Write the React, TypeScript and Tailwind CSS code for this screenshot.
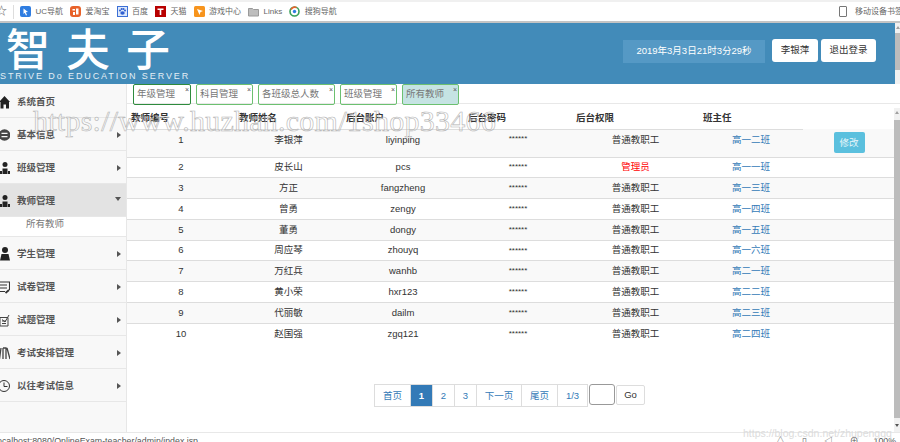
import React from "react";

const font = "font-['Liberation_Sans','Noto_Sans_CJK_SC',sans-serif]";

const B = ({ children }: { children: React.ReactNode }) => (
  <svg width="11" height="11" viewBox="0 0 11 11" className="shrink-0">
    {children}
  </svg>
);

const bookmarks: [string, React.ReactNode][] = [
  ["UC导航", <B><rect width="11" height="11" rx="2" fill="#2f7de1" /><path d="M3.500 2.500 8 6 5.800 6.300 7 9 6 9.400 4.800 6.800 3.500 8z" fill="#fff" /></B>],
  ["爱淘宝", <B><rect width="11" height="11" rx="3" fill="#e8622a" /><path d="M2.500 3h2.500v1.500H2.500zM6 2.500h2.500v6H6zM3 6h2v3H3z" fill="#fff" /></B>],
  ["百度", <B><rect x=".5" y=".5" width="10" height="10" fill="#dce8fb" stroke="#3b6fd6" /><ellipse cx="5.500" cy="7" rx="2.200" ry="1.800" fill="#2f5fd0" /><circle cx="3" cy="4.500" r="1" fill="#2f5fd0" /><circle cx="4.700" cy="3" r="1" fill="#2f5fd0" /><circle cx="6.500" cy="3" r="1" fill="#2f5fd0" /><circle cx="8" cy="4.500" r="1" fill="#2f5fd0" /></B>],
  ["天猫", <B><rect width="11" height="11" fill="#b80000" /><path d="M2.500 2.500h6v1.600H6.300V9H4.700V4.100H2.500z" fill="#fff" /></B>],
  ["游戏中心", <B><rect width="11" height="11" rx="1.500" fill="#f7941d" /><path d="m3 3 6 2-2.500 1L5.500 9z" fill="#fff" /></B>],
  ["Links", <B><path d="M.5 2.500h4l1 1h5v6.500H.5z" fill="#bdbdbd" stroke="#9a9a9a" /></B>],
  ["搜狗导航", <B><circle cx="5.500" cy="5.500" r="4.500" fill="#fff" stroke="#3aa05a" strokeWidth="1.600" /><path d="M2 3.500A4.500 4.500 0 0 1 7.500 1.500" fill="none" stroke="#e8622a" strokeWidth="1.600" /><circle cx="5.500" cy="5.500" r="1.700" fill="#2f7de1" /></B>],
];

const rows = [
  ["1", "李银萍", "liyinping", "普通教职工", "高一二班"],
  ["2", "皮长山", "pcs", "管理员", "高一一班"],
  ["3", "方正", "fangzheng", "普通教职工", "高一三班"],
  ["4", "曾勇", "zengy", "普通教职工", "高一四班"],
  ["5", "董勇", "dongy", "普通教职工", "高一五班"],
  ["6", "周应琴", "zhouyq", "普通教职工", "高一六班"],
  ["7", "万红兵", "wanhb", "普通教职工", "高二一班"],
  ["8", "黄小荣", "hxr123", "普通教职工", "高二二班"],
  ["9", "代丽敏", "dailm", "普通教职工", "高二三班"],
  ["10", "赵国强", "zgq121", "普通教职工", "高二四班"],
];

const Ic = ({ children }: { children: React.ReactNode }) => (
  <svg width="16" height="16" viewBox="0 0 16 16" className="shrink-0 ml-[-6px] text-[#222]" fill="currentColor">
    {children}
  </svg>
);
const People = (
  <>
    <circle cx="11" cy="4.500" r="2.500" />
    <path d="M8.500 8.500h5V14h-5z" />
    <path d="M6 11h2v3H6zM14 11h2v3h-2z" />
  </>
);
const Student = (
  <>
    <circle cx="11" cy="4" r="3" />
    <path d="M7.500 8h7l1.500 6.500H6z" />
  </>
);
const icons: React.ReactNode[] = [
  <path d="M10.500 2 5 8h1.500v6.500h3v-4h2.500v4h3V8H16z" />,
  <>
    <circle cx="10.500" cy="8" r="5.800" fill="#444" />
    <path d="M7.500 5.800h6v1.200h-6zM7.500 9h6v1.200h-6z" fill="#f5f5f5" />
  </>,
  People,
  People,
  Student,
  <g fill="none" stroke="#333" strokeWidth="1.100">
    <path d="M5 3h10.500v8M5 6h8M5 9h8M5 12.500h6" />
    <path d="m11.500 14 3.500-3" strokeWidth="1.800" />
  </g>,
  <g fill="none" stroke="#444" strokeWidth="1">
    <path d="M6 5.500h8V14H6zM8 9h4M8 11.500h4" />
    <path d="m8 7.500 3 2.500 4-7" />
  </g>,
  <g fill="none" stroke="#444" strokeWidth="1.300">
    <path d="M7 3 5.500 14M9 3v11M9 3h3v11M13 3l3 11" />
  </g>,
  <g fill="none" stroke="#333" strokeWidth="1">
    <circle cx="10" cy="8" r="5.500" />
    <path d="M10 4.500V8.500h3.500" />
  </g>,
];

const menu = ["系统首页", "基本信息", "班级管理", "教师管理", "学生管理", "试卷管理", "试题管理", "考试安排管理", "以往考试信息"];

const tabs: [string, string, string][] = [
  ["年级管理", "w-[58px]", "border-[#2e8b3d]"],
  ["科目管理", "w-[57px]", "border-[#6cc070]"],
  ["各班级总人数", "w-[77px]", "border-[#6cc070]"],
  ["班级管理", "w-[57px]", "border-[#6cc070]"],
  ["所有教师", "w-[57px]", "border-[#6cc070] bg-[#c5e3e3]"],
];

const Scroll = ({ thumb, gap }: { thumb: string; gap: string }) => (
  <>
    <div className={`${gap} flex justify-center pt-[3px]`}>
      <span className="w-0 h-0 border-x-[2.500px] border-x-transparent border-b-[3px] border-b-[#a0a0a0]" />
    </div>
    <div className={`${thumb} bg-[#bcbcbc]`} />
  </>
);

export default function App() {
  return (
    <div className={`${font} w-[900px] h-[442px] overflow-hidden relative bg-white flex flex-col`}>
      {/* browser bookmark bar */}
      <div className="h-[23px] shrink-0 border-t-2 border-t-[#f0f0f0] border-b-2 border-b-[#c4c4c4] flex items-center text-[8px] text-[#666]">
        <span className="text-[#666] text-[11px] ml-[-4px] w-[17px]">☆</span>
        <span className="w-px h-[14px] bg-[#ddd] mr-[6px]" />
        {bookmarks.map(([t, i]) => (
          <span key={t} className="flex items-center gap-[4.500px] mr-[7px]">
            {i}
            {t}
          </span>
        ))}
        <span className="ml-auto flex items-center gap-[8px] mr-[-3px] whitespace-nowrap">
          <span className="w-[8px] h-[11px] border border-[#777] rounded-[1px]" />
          移动设备书签
        </span>
      </div>

      {/* header */}
      <div className="h-[61px] shrink-0 bg-[#428bb9] relative flex items-center justify-end pr-[24px]">
        <div className="absolute left-[6px] top-[2px] text-white text-[44px] leading-[44px] tracking-[16px] font-['Noto_Sans_CJK_SC',sans-serif] font-medium">智夫子</div>
        <div className="absolute left-0 top-[47px] text-[#e3eef5] text-[9px] leading-[12px] tracking-[1.900px] whitespace-nowrap">STRIVE Do EDUCATION SERVER</div>
        <div className="w-[142px] h-[23px] bg-[#5599c5] text-white text-[9.500px] flex items-center justify-center mr-[7px] mt-[-4px]">2019年3月3日21时3分29秒</div>
        <div className="w-[46px] h-[23px] bg-white rounded-[3px] text-[#333] text-[9.500px] flex items-center justify-center mr-[3px] mt-[-6px]">李银萍</div>
        <div className="w-[55px] h-[23px] bg-white rounded-[3px] text-[#333] text-[9.500px] flex items-center justify-center mt-[-6px]">退出登录</div>
        <div className="absolute right-0 top-0 bottom-0 w-[5px] bg-[#f1f1f1] flex flex-col">
          <Scroll gap="h-[10px]" thumb="h-[37px]" />
        </div>
      </div>

      {/* body */}
      <div className="flex-1 flex min-h-0">
        <div className="w-[127px] shrink-0 bg-[#f8f8f8] border-r border-[#e7e7e7] flex flex-col text-[9.500px] font-bold text-[#555] pt-px">
          {menu.map((m, i) => (
            <React.Fragment key={m}>
              <div className={`h-[33px] shrink-0 flex items-center gap-[7px] pr-[5px] pt-[2px] border-b border-[#e7e7e7] ${i === 3 ? "bg-[#e3e3e3]" : ""}`}>
                <Ic>{icons[i]}</Ic>
                <span className="flex-1 whitespace-nowrap">{m}</span>
                {i > 0 && (i === 3 ? (
                  <span className="w-0 h-0 border-x-[3.500px] border-x-transparent border-t-[4px] border-t-[#555] mb-[4px]" />
                ) : (
                  <span className="w-0 h-0 border-y-[3.500px] border-y-transparent border-l-[4px] border-l-[#555]" />
                ))}
              </div>
              {i === 3 && (
                <div className="h-[20px] shrink-0 bg-white border-b border-[#e7e7e7] pl-[26px] flex items-center font-normal text-[9.500px] text-[#777] pb-[4px]">所有教师</div>
              )}
            </React.Fragment>
          ))}
        </div>

        <div className="flex-1 min-w-0 flex flex-col">
          <div className="h-[19px] shrink-0 flex gap-[5px] pl-[6px] text-[9.500px] text-[#777] border-b border-[#e8e8e8] box-content">
            {tabs.map(([t, w, c]) => (
              <div key={t} className={`${w} h-[21px] rounded-[2px] border ${c} relative flex items-center pl-[3px] whitespace-nowrap`}>
                {t}
                <span className="absolute right-[1px] top-[0px] text-[7px] leading-[10px] text-[#555]">×</span>
              </div>
            ))}
          </div>

          <div className="flex-1 min-h-0 pt-[3px] pr-[5px] flex flex-col">
            <table className="table-fixed w-[768px] border-collapse text-[9.500px] text-[#333]">
              <colgroup>
                <col className="w-[108px]" />
                <col className="w-[107px]" />
                <col className="w-[122px]" />
                <col className="w-[108px]" />
                <col className="w-[127px]" />
                <col className="w-[104px]" />
                <col className="w-[92px]" />
              </colgroup>
              <thead>
                <tr className="h-[22px]">
                  {["教师编号", "教师姓名", "后台账户", "后台密码", "后台权限", "班主任", ""].map((h, i) => (
                    <th key={i} className={`text-left font-bold align-middle pl-[4px] ${i < 6 ? "border-b border-[#ddd]" : ""}`}>{h}</th>
                  ))}
                </tr>
              </thead>
              <tbody>
                {rows.map((r, i) => {
                  const v = i === 0 ? "align-top pt-[3px]" : "align-middle";
                  return (
                    <tr key={r[0]} className={`${i === 9 ? "" : "border-b border-[#ddd]"} ${i === 0 ? "h-[28px]" : "h-[20.800px]"} ${i % 2 === 0 ? "bg-[#f9f9f9]" : "bg-white"}`}>
                      <td className={`text-center ${v}`}>{r[0]}</td>
                      <td className={`text-center ${v}`}>{r[1]}</td>
                      <td className={`text-center ${v}`}>{r[2]}</td>
                      <td className={`text-center text-[8px] ${v}`}>******</td>
                      <td className={`text-center ${i === 1 ? "text-[#f00]" : ""} ${v}`}>{r[3]}</td>
                      <td className={`text-center text-[#337ab7] ${v}`}>{r[4]}</td>
                      <td className="text-center align-middle">
                        {i === 0 && <span className="inline-block w-[31px] h-[21px] leading-[21px] bg-[#5bc0de] text-[#e8f6fa] rounded-[2px]">修改</span>}
                      </td>
                    </tr>
                  );
                })}
              </tbody>
            </table>

            <div className="flex items-start ml-[248px] mt-[40px] text-[9.500px] text-[#337ab7]">
              <div className="flex h-[23px]">
                {["首页", "1", "2", "3", "下一页", "尾页", "1/3"].map((p, i) => (
                  <span key={p} className={`h-[23px] flex items-center justify-center border border-[#ddd] -ml-px ${["w-[37px]", "w-[23px]", "w-[23px]", "w-[23px]", "w-[46px]", "w-[37px]", "w-[31px]"][i]} ${i === 1 ? "bg-[#337ab7] text-white border-[#337ab7] font-bold" : ""}`}>{p}</span>
                ))}
              </div>
              <span className="w-[26px] h-[21px] border border-[#999] rounded-[3px] ml-px" />
              <span className="w-[29px] h-[20px] mt-px border border-[#ddd] rounded-[2px] ml-px text-[#333] flex items-center justify-center">Go</span>
            </div>
          </div>
        </div>
      </div>

      {/* status bar */}
      <div className="h-[10px] shrink-0 border-t border-[#e8e8e8] text-[8.800px] leading-[11px] pt-[3px] text-[#555] flex overflow-hidden box-border">
        <span className="ml-[-3px] whitespace-nowrap">ocalhost:8080/OnlineExam-teacher/admin/index.jsp</span>
        <span className="ml-auto mr-[4px] flex items-start gap-[17px] whitespace-nowrap">
          <span>△</span>
          <span>▯</span>
          <span>◁</span>
          <span className="mr-[-2px]">⊕</span>
          <span>100%</span>
        </span>
      </div>

      {/* right scrollbar */}
      <div className="absolute right-0 top-[108px] w-[6px] h-[324px] bg-[#f1f1f1]">
        <Scroll gap="h-[12px]" thumb="h-[298px]" />
        <div className="flex justify-center pt-[6px]">
          <span className="w-0 h-0 border-x-[2.500px] border-x-transparent border-t-[3px] border-t-[#555]" />
        </div>
      </div>

      {/* watermarks */}
      <div className="absolute left-[33px] top-[106px] text-[30px] leading-[30px] font-['Liberation_Serif',serif] text-transparent [-webkit-text-stroke:0.6px_#b4b4b4] tracking-[0.25px] whitespace-nowrap">https://www.huzhan.com/1shop33466</div>
      <div className="absolute left-[743px] top-[426px] text-[10.500px] leading-[14px] text-[#dcdcdc] whitespace-nowrap">https://blog.csdn.net/zhupengqq</div>
    </div>
  );
}
